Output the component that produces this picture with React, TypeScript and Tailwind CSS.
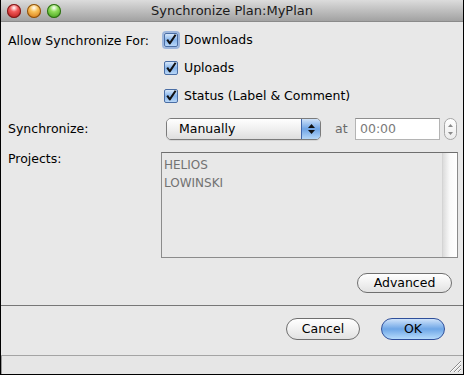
import React from 'react';

const font = { fontFamily: '"DejaVu Sans", "Liberation Sans", sans-serif' };

function Light({ from, to, edge }: { from: string; to: string; edge: string }) {
  return (
    <span
      className="block h-[14px] w-[14px] rounded-full"
      style={{
        background: `radial-gradient(circle at 50% 28%, #ffffff 0%, ${from} 32%, ${to} 92%)`,
        boxShadow: `inset 0 0 0 1px ${edge}`,
      }}
    />
  );
}

function Checkbox({ focus }: { focus?: boolean }) {
  return (
    <span
      className={
        'flex h-[14px] w-[14px] shrink-0 items-center justify-center rounded-[2px] border border-[#4a6ea5] bg-gradient-to-b from-[#d8e8fa] via-[#86b4ea] to-[#b9d7f7] ' +
        (focus ? 'shadow-[0_0_0_2px_rgba(95,140,210,0.55)]' : '')
      }
    >
      <svg width="12" height="12" viewBox="0 0 12 12">
        <path d="M2.2 5.6 L4.8 9.4 L10.6 0.8" fill="none" stroke="#111" strokeWidth="2" strokeLinejoin="round" />
      </svg>
    </span>
  );
}

function CheckRow({ label, focus, className }: { label: string; focus?: boolean; className?: string }) {
  return (
    <div className={'flex h-[20px] items-center gap-[6px] pl-[163px] ' + (className ?? '')}>
      <Checkbox focus={focus} />
      <span className="text-[12.5px] text-black">{label}</span>
    </div>
  );
}

function PillButton({ label, className, blue }: { label: string; className: string; blue?: boolean }) {
  return (
    <button
      type="button"
      className={
        'flex items-center justify-center rounded-full border text-[12.5px] text-black ' +
        (blue
          ? 'border-[#2f4f9a] bg-gradient-to-b from-[#cfe3fa] via-[#6ea6e6] to-[#b6dbfb] '
          : 'border-[#6f6f6f] bg-gradient-to-b from-[#ffffff] via-[#f1f1f1] to-[#e2e2e2] ') +
        className
      }
    >
      {label}
    </button>
  );
}

export default function App() {
  return (
    <div style={font} className="h-[375px] w-[464px] overflow-hidden bg-black">
      <div className="flex h-[374px] w-[462px] ml-px flex-col bg-[#e8e8e8]">
        {/* title bar */}
        <div className="relative flex h-[22px] shrink-0 items-center justify-center border-b border-[#8a8a8a] bg-gradient-to-b from-[#dcdcdc] to-[#a2a2a2]">
          <div className="absolute left-[6px] top-[4px] flex gap-[6px]">
            <Light from="#f25a5a" to="#b1120f" edge="#7a1a1a" />
            <Light from="#f9c25a" to="#d3700d" edge="#8a5010" />
            <Light from="#8fdc5a" to="#3a9a12" edge="#2d6a16" />
          </div>
          <span className="text-[13px] text-[#1a1a1a]">Synchronize Plan:MyPlan</span>
        </div>

        <div className="relative pt-[8px]">
          <span className="absolute left-[7px] top-[10px] text-[12.5px] text-black">Allow Synchronize For:</span>
          <CheckRow label="Downloads" focus />
          <CheckRow label="Uploads" className="mt-[8px]" />
          <CheckRow label="Status (Label & Comment)" className="mt-[8px]" />
        </div>

        {/* synchronize row */}
        <div className="mt-[12px] flex h-[22px] items-center">
          <span className="w-[165px] pl-[7px] text-[12.5px] text-black">Synchronize:</span>
          <div className="flex h-[22px] w-[155px] overflow-hidden rounded-[5px] border border-[#7b7b7b] shadow-[0_1px_0_rgba(0,0,0,0.08)]">
            <div className="flex flex-1 items-center bg-gradient-to-b from-[#ffffff] via-[#f0f0f0] to-[#dedede] pl-[12px] text-[12.5px] text-black">
              Manually
            </div>
            <div className="flex w-[19px] flex-col items-center justify-center gap-[2px] border-l border-[#4066aa] bg-gradient-to-b from-[#cfe2f8] via-[#6ea3e4] to-[#b5d7f8]">
              <svg width="7" height="4" viewBox="0 0 7 4"><path d="M3.5 0 L7 4 L0 4 Z" fill="#111" /></svg>
              <svg width="7" height="4" viewBox="0 0 7 4"><path d="M0 0 L7 0 L3.5 4 Z" fill="#111" /></svg>
            </div>
          </div>
          <span className="ml-[14px] w-[20px] text-[12.5px] text-[#6a6a6a]">at</span>
          <div className="flex h-[22px] w-[85px] items-center border border-[#b4b4b4] border-t-[#8e8e8e] bg-white pl-[4px] text-[12.5px] text-[#7a7a7a]">
            00:00
          </div>
          <div className="ml-[4px] flex h-[22px] w-[13px] flex-col items-center justify-center gap-[5px] rounded-full border border-[#a6a6a6] bg-gradient-to-b from-[#ffffff] to-[#ececec]">
            <svg width="5" height="3" viewBox="0 0 5 3"><path d="M2.5 0 L5 3 L0 3 Z" fill="#8a8a8a" /></svg>
            <svg width="5" height="3" viewBox="0 0 5 3"><path d="M0 0 L5 0 L2.5 3 Z" fill="#8a8a8a" /></svg>
          </div>
        </div>

        {/* projects */}
        <div className="mt-[12px] flex">
          <span className="-mt-[1px] w-[160px] pl-[7px] text-[12.5px] leading-[15px] text-black">Projects:</span>
          <div className="flex h-[106px] w-[297px] border border-[#8b8b8b] border-t-[#6e6e6e]">
            <div className="flex-1 pl-[2px] pt-[3px] text-[12px] leading-[18px] text-[#727272]">
              <div>HELIOS</div>
              <div>LOWINSKI</div>
            </div>
            <div className="w-[15px] border-l border-[#d4d4d4] bg-gradient-to-r from-[#dcdcdc] via-[#fafafa] to-[#ffffff]" />
          </div>
        </div>

        <div className="mt-[15px] flex justify-end pr-[11px]">
          <PillButton label="Advanced" className="h-[20px] w-[95px]" />
        </div>

        <div className="mt-[12px] h-px bg-[#777777]" />

        <div className="mt-[12px] flex justify-end gap-[21px] pr-[18px]">
          <PillButton label="Cancel" className="h-[22px] w-[74px]" />
          <PillButton label="OK" blue className="h-[22px] w-[64px]" />
        </div>

        <div className="mt-auto flex h-[19px] items-end justify-end border-t border-[#a4a4a4] bg-[#e6e6e6] shadow-[inset_1px_0_0_#9a9a9a]">
          <svg width="13" height="13" viewBox="0 0 13 13" className="mb-px mr-px">
            <path d="M12 1 L1 12 M12 5 L5 12 M12 9 L9 12" stroke="#8a8a8a" strokeWidth="1" />
            <path d="M12 2 L2 12 M12 6 L6 12 M12 10 L10 12" stroke="#ffffff" strokeWidth="1" />
          </svg>
        </div>
      </div>
    </div>
  );
}
